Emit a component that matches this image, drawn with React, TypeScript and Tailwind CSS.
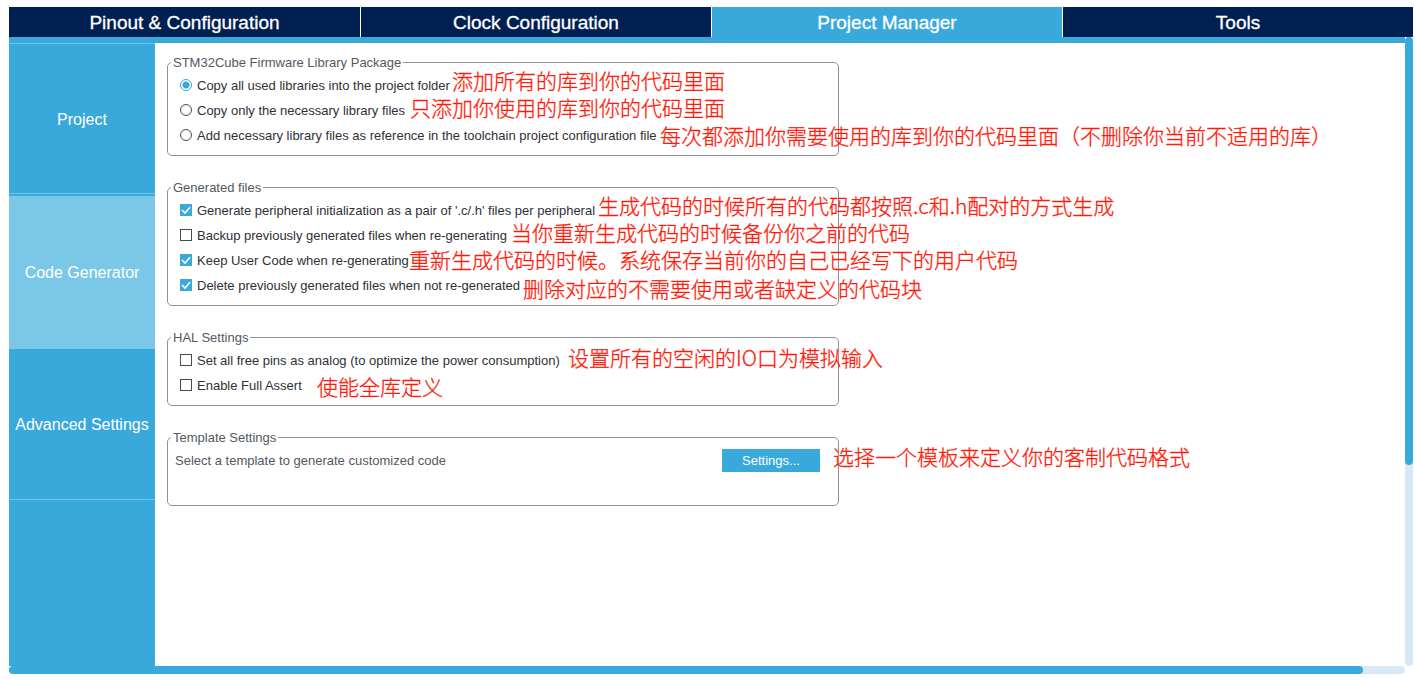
import { useState } from "react";
import type { ReactNode } from "react";

const tabs = ["Pinout & Configuration", "Clock Configuration", "Project Manager", "Tools"];
const sections = ["Project", "Code Generator", "Advanced Settings"];

const libraryOptions = [
  "Copy all used libraries into the project folder",
  "Copy only the necessary library files",
  "Add necessary library files as reference in the toolchain project configuration file",
];

const generatedOptions = [
  { label: "Generate peripheral initialization as a pair of '.c/.h' files per peripheral", on: true },
  { label: "Backup previously generated files when re-generating", on: false },
  { label: "Keep User Code when re-generating", on: true },
  { label: "Delete previously generated files when not re-generated", on: true },
];

const halOptions = [
  { label: "Set all free pins as analog (to optimize the power consumption)", on: false },
  { label: "Enable Full Assert", on: false },
];

// Notes written freely over the page.
const notes = [
  { text: "添加所有的库到你的代码里面", place: "left-[452px] top-[69px]" },
  { text: "只添加你使用的库到你的代码里面", place: "left-[410px] top-[96px]" },
  { text: "每次都添加你需要使用的库到你的代码里面（不删除你当前不适用的库）", place: "left-[660px] top-[124px]" },
  { text: "生成代码的时候所有的代码都按照.c和.h配对的方式生成", place: "left-[598px] top-[194px]" },
  { text: "当你重新生成代码的时候备份你之前的代码", place: "left-[511px] top-[221px]" },
  { text: "重新生成代码的时候。系统保存当前你的自己已经写下的用户代码", place: "left-[409px] top-[248px]" },
  { text: "删除对应的不需要使用或者缺定义的代码块", place: "left-[523px] top-[277px]" },
  { text: "设置所有的空闲的IO口为模拟输入", place: "left-[568px] top-[346px]" },
  { text: "使能全库定义", place: "left-[317px] top-[375px]" },
  { text: "选择一个模板来定义你的客制代码格式", place: "left-[833px] top-[445px]" },
];

function Group({ title, children }: { title: string; children: ReactNode }) {
  return (
    <fieldset className="rounded-[5px] border border-[#8c9096] pr-[18px] pb-[7px] pl-[3px]">
      <legend className="px-0.5 pt-0.5 leading-[14px] text-[#55585e]">{title}</legend>
      <div className="pt-[3px]">{children}</div>
    </fieldset>
  );
}

function Radio({ label, on }: { label: string; on: boolean }) {
  return (
    <label className="flex h-[25px] items-center gap-[5px] pb-px pl-[9px]">
      <input
        type="radio"
        name="library"
        defaultChecked={on}
        className="size-3 shrink-0 appearance-none rounded-full border border-[#4a4a4a] bg-white checked:border-[#39a9dc] checked:bg-[radial-gradient(circle,#39a9dc_3px,white_4px)]"
      />
      <span className="pt-0.5 leading-4">{label}</span>
    </label>
  );
}

function Check({ label, on }: { label: string; on: boolean }) {
  return (
    <label className="flex h-[25px] items-center gap-[5px] pb-px pl-[9px]">
      <span className="grid shrink-0">
        <input
          type="checkbox"
          defaultChecked={on}
          className="peer col-start-1 row-start-1 size-3 appearance-none border border-[#4a4a4a] bg-white checked:border-[#39a9dc] checked:bg-[#39a9dc]"
        />
        <svg
          viewBox="0 0 12 12"
          className="pointer-events-none invisible col-start-1 row-start-1 size-3 peer-checked:visible"
          fill="none"
          stroke="white"
          strokeWidth="1.6"
          aria-hidden="true"
        >
          <path d="M2 6 L5 9 L10 3.2" />
        </svg>
      </span>
      <span className="pt-0.5 leading-4">{label}</span>
    </label>
  );
}

export default function App() {
  const [tab, setTab] = useState(2);
  const [section, setSection] = useState(1);

  return (
    <div className="relative flex min-h-screen flex-col bg-white pt-[7px] pr-0.5 pb-1.5 pl-[9px] font-['Liberation_Sans',Arial,sans-serif] text-[13px] text-[#2f3136]">
      <nav className="grid grid-cols-4" aria-label="Views">
        {tabs.map((t, i) => (
          <button
            key={t}
            type="button"
            onClick={() => setTab(i)}
            className={
              i === tab
                ? "h-[30px] border-l border-white bg-[#39a9dc] pt-0.5 text-[19px] text-white [-webkit-text-stroke:0.3px_white] first:border-l-0"
                : "h-[30px] border-l border-white bg-[#002052] pt-0.5 text-[19px] text-white [-webkit-text-stroke:0.3px_white] first:border-l-0"
            }
          >
            {t}
          </button>
        ))}
      </nav>

      <div className="flex grow">
        <div className="flex min-w-0 grow flex-col">
          <div className="h-1.5 bg-[#39a9dc]" />
          <div className="flex grow">
            <aside className="w-[146px] shrink-0 bg-[#39a9dc]">
              <ul>
                {sections.map((s, i) => (
                  <li
                    key={s}
                    className={
                      i === section
                        ? "h-[153px] bg-[#7bc7e8]"
                        : "h-[153px] pb-0.5 first:border-t first:border-[#73c5eb]"
                    }
                  >
                    <button
                      type="button"
                      onClick={() => setSection(i)}
                      className={
                        i === section
                          ? "block h-full w-full text-[16px] whitespace-nowrap text-white"
                          : "block h-full w-full border-b border-[#73c5eb] pt-0.5 text-[16px] whitespace-nowrap text-white"
                      }
                    >
                      {s}
                    </button>
                  </li>
                ))}
              </ul>
            </aside>

            <main className="min-w-0 grow px-3 pt-[11px]">
              <div className="flex max-w-[672px] flex-col gap-[23px]">
                <Group title="STM32Cube Firmware Library Package">
                  {libraryOptions.map((label, i) => (
                    <Radio key={label} label={label} on={i === 0} />
                  ))}
                </Group>
                <Group title="Generated files">
                  {generatedOptions.map((o) => (
                    <Check key={o.label} {...o} />
                  ))}
                </Group>
                <Group title="HAL Settings">
                  {halOptions.map((o) => (
                    <Check key={o.label} {...o} />
                  ))}
                </Group>
                <Group title="Template Settings">
                  <div className="flex h-[50px] items-start justify-between pl-1 text-[#55585e]">
                    <span className="leading-[25px]">Select a template to generate customized code</span>
                    <button type="button" className="mt-px h-[23px] w-[98px] bg-[#39a9dc] text-white">
                      Settings...
                    </button>
                  </div>
                </Group>
              </div>
            </main>
          </div>
          <div className="h-2 rounded-full bg-[#d9e8f5]">
            <div className="h-2 w-[97%] rounded-full bg-[#39a9dc]" />
          </div>
        </div>
        <div className="mb-2 flex w-2 shrink-0 flex-col rounded-full bg-[#d9e8f5]">
          <div className="basis-[68%] rounded-full bg-[#39a9dc]" />
        </div>
      </div>

      {notes.map((n) => (
        <p
          key={n.text}
          className={`pointer-events-none absolute font-['Noto_Sans_CJK_SC',sans-serif] text-[21px] leading-[22px] font-light whitespace-nowrap text-[#ff1a0a] [-webkit-text-stroke:0.3px_#ff1a0a] ${n.place}`}
        >
          {n.text}
        </p>
      ))}
    </div>
  );
}
